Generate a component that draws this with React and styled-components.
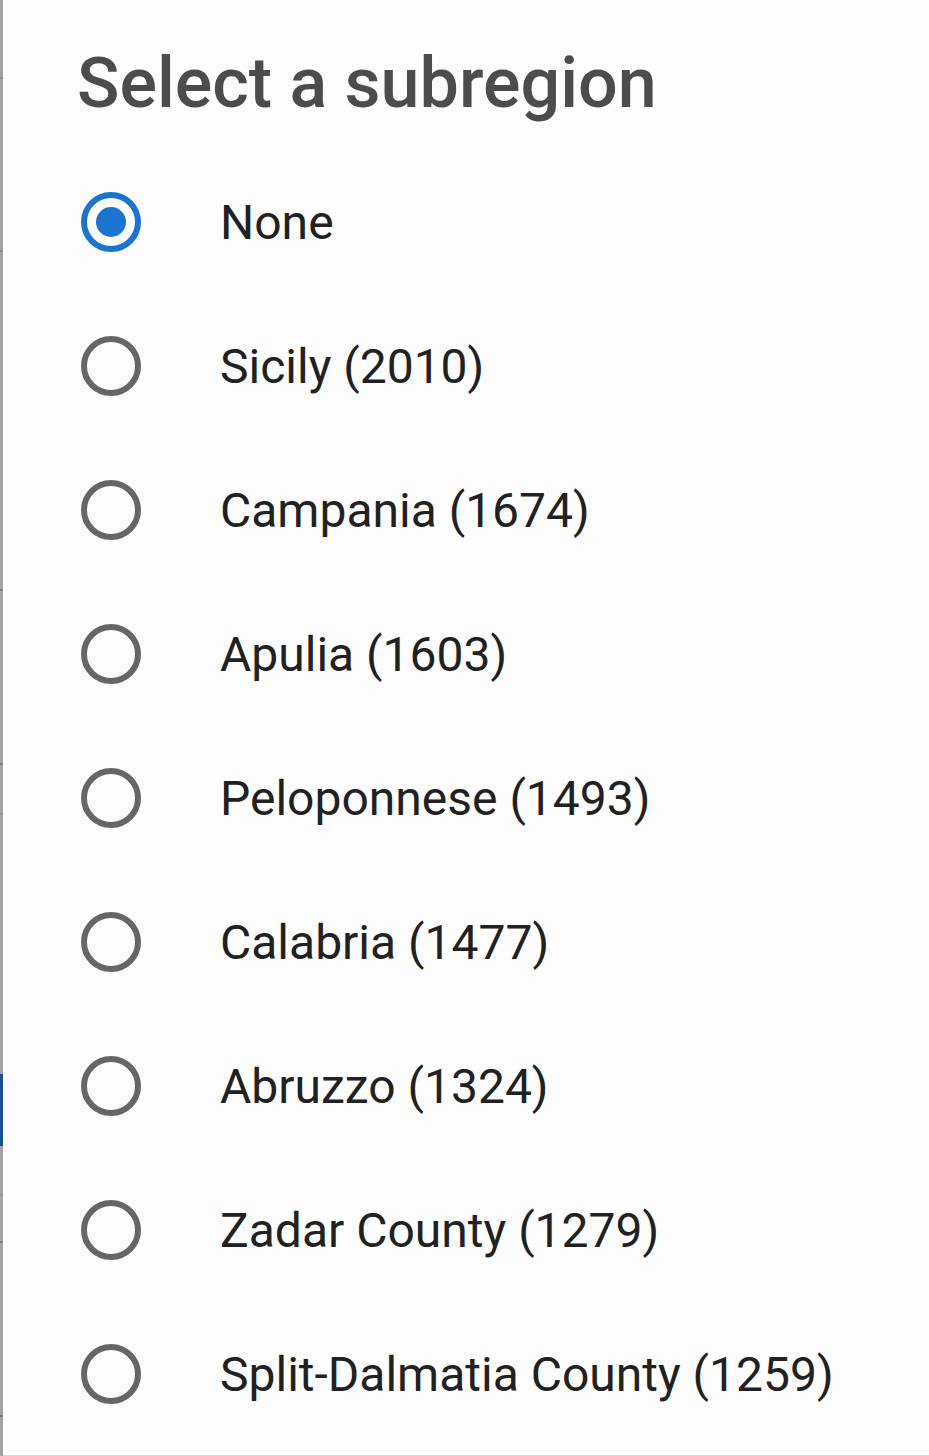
import React from "react";
import styled, { createGlobalStyle } from "styled-components";

const GlobalStyle = createGlobalStyle`
  html, body {
    margin: 0;
    padding: 0;
    background: #fdfdfd;
  }
  body {
    font-family: Roboto, "Noto Sans", "Liberation Sans", sans-serif;
  }
`;

const options = [
  "None",
  "Sicily (2010)",
  "Campania (1674)",
  "Apulia (1603)",
  "Peloponnese (1493)",
  "Calabria (1477)",
  "Abruzzo (1324)",
  "Zadar County (1279)",
  "Split-Dalmatia County (1259)",
];

// strip of the page behind the dialog, top to bottom
const edge = [
  { h: 77, c: "#a3a3a3" },
  { h: 2, c: "#8e8e8e" },
  { h: 171, c: "#a3a3a3" },
  { h: 2, c: "#8e8e8e" },
  { h: 337, c: "#a3a3a3" },
  { h: 2, c: "#7e7e7e" },
  { h: 172, c: "#a3a3a3" },
  { h: 2, c: "#7e7e7e" },
  { h: 48, c: "#a3a3a3" },
  { h: 2, c: "#999" },
  { h: 259, c: "#a3a3a3" },
  { h: 72, c: "#1a4f8a" },
  { h: 48, c: "#a3a3a3" },
  { h: 2, c: "#999" },
  { h: 45, c: "#a3a3a3" },
  { h: 2, c: "#7e7e7e" },
  { h: 172, c: "#a3a3a3" },
  { h: 2, c: "#7e7e7e" },
  { h: 40, c: "#a3a3a3" },
];

const Screen = styled.div`
  display: flex;
  width: 929px;
  height: 1456px;
  overflow: hidden;
  background: #fdfdfd;
`;

const Edge = styled.div`
  display: flex;
  flex-direction: column;
  width: 3px;
  flex: none;
`;

const EdgePiece = styled.div`
  flex: none;
  width: 100%;
`;

const Dialog = styled.div`
  flex: 1;
  display: flex;
  flex-direction: column;
  padding: 37px 0 0 74px;
  border-bottom: 1px solid #d6d6d6;
  box-sizing: border-box;
`;

const Title = styled.h1`
  margin: 0 0 21px;
  font-size: 70px;
  font-weight: 500;
  line-height: 92px;
  color: #4b4c4e;
`;

const List = styled.div`
  display: flex;
  flex-direction: column;
`;

const Row = styled.label`
  display: flex;
  align-items: center;
  height: 144px;
  gap: 79px;
`;

const Radio = styled.span`
  flex: none;
  box-sizing: border-box;
  width: 60px;
  height: 60px;
  margin-left: 4px;
  border-radius: 50%;
  border: 6px solid ${(p) => (p.checked ? "#1b74d0" : "#666666")};
  display: flex;
  align-items: center;
  justify-content: center;

  &::after {
    content: "";
    width: 30px;
    height: 30px;
    border-radius: 50%;
    background: #1b74d0;
    display: ${(p) => (p.checked ? "block" : "none")};
  }
`;

const Text = styled.span`
  font-size: 48px;
  color: #212121;
`;

export default function App() {
  return (
    <>
      <GlobalStyle />
      <Screen>
        <Edge>
          {edge.map((e, i) => (
            <EdgePiece key={i} style={{ height: e.h, background: e.c }} />
          ))}
        </Edge>
        <Dialog>
          <Title>Select a subregion</Title>
          <List>
            {options.map((o, i) => (
              <Row key={o}>
                <Radio checked={i === 0} />
                <Text>{o}</Text>
              </Row>
            ))}
          </List>
        </Dialog>
      </Screen>
    </>
  );
}
